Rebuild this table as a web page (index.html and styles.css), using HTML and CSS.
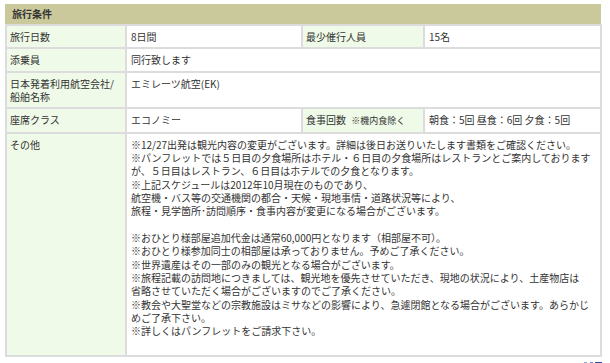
FILE: index.html
```html
<!DOCTYPE html>
<html lang="ja">
<head>
<meta charset="utf-8">
<title>旅行条件</title>
<link rel="stylesheet" href="styles.css">
</head>
<body>
<div class="box">
  <div class="ttl">旅行条件</div>
  <table class="cond">
    <colgroup>
      <col class="c1"><col class="c2"><col class="c3"><col class="c4">
    </colgroup>
    <tr>
      <th>旅行日数</th>
      <td>8日間</td>
      <th>最少催行人員</th>
      <td>15名</td>
    </tr>
    <tr>
      <th>添乗員</th>
      <td colspan="3">同行致します</td>
    </tr>
    <tr>
      <th>日本発着利用航空会社/<br>船舶名称</th>
      <td colspan="3">エミレーツ航空(EK)</td>
    </tr>
    <tr>
      <th>座席クラス</th>
      <td>エコノミー</td>
      <th>食事回数 <span class="note">※機内食除く</span></th>
      <td>朝食：5回 昼食：6回 夕食：5回</td>
    </tr>
    <tr>
      <th>その他</th>
      <td colspan="3" class="other">※12/27出発は観光内容の変更がございます。詳細は後日お送りいたします書類をご確認ください。<br>※パンフレットでは５日目の夕食場所はホテル・６日目の夕食場所はレストランとご案内しております<br>が、５日目はレストラン、６日目はホテルでの夕食となります。<br>※上記スケジュールは2012年10月現在のものであり、<br>航空機・バス等の交通機関の都合・天候・現地事情・道路状況等により、<br>旅程・見学箇所･訪問順序・食事内容が変更になる場合がございます。<br><br>※おひとり様部屋追加代金は通常60,000円となります（相部屋不可）。<br>※おひとり様参加同士の相部屋は承っておりません。予めご了承ください。<br>※世界遺産はその一部のみの観光となる場合がございます。<br>※旅程記載の訪問地につきましては、観光地を優先させていただき、現地の状況により、土産物店は<br>省略させていただく場合がございますのでご了承ください。<br>※教会や大聖堂などの宗教施設はミサなどの影響により、急遽閉館となる場合がございます。あらかじ<br>めご了承下さい。<br>※詳しくはパンフレットをご請求下さい。<br><br></td>
    </tr>
  </table>
  <div class="pagetop">
    <svg class="pt-icon" width="18" height="8" viewBox="0 0 18 8" aria-hidden="true">
      <rect x="0" y="5" width="3" height="3" fill="#8fa6d0"/>
      <rect x="6" y="5" width="3" height="3" fill="#6f8ccc"/>
      <rect x="11" y="5" width="7" height="3" fill="#2a4fa8"/>
    </svg>
  </div>
</div>
</body>
</html>
```

FILE: styles.css
```css
html, body {
  margin: 0;
  padding: 0;
  background: #ffffff;
}

body {
  font-family: "Noto Sans CJK JP", "Noto Sans", sans-serif;
  font-size: 10px;
  color: #333333;
}

.box {
  margin: 4px 0 0 5px;
  width: 597px;
}

.ttl {
  width: 589px;
  height: 20px;
  line-height: 20px;
  padding-left: 7px;
  background: #c9c99b;
  font-weight: bold;
  color: #333333;
}

.cond {
  width: 597px;
  table-layout: fixed;
  border-collapse: separate;
  border-spacing: 2px;
  background: #dcdcdc;
}

.c1 { width: 118px; }
.c2 { width: 174px; }
.c3 { width: 120px; }
.c4 { width: 175px; }

.cond th,
.cond td {
  padding: 4px 4px;
  line-height: 13.33px;
  vertical-align: top;
  text-align: left;
  font-weight: normal;
  white-space: nowrap;
  overflow: visible;
}

.cond th {
  background: #effae8;
  padding-left: 3px;
}

.cond td {
  background: #ffffff;
}

.other {
  padding-bottom: 6px;
}

.note {
  font-size: 9px;
  margin-left: 3px;
}

.pagetop {
  display: flex;
  justify-content: flex-end;
  padding: 0 0 0 0;
  margin-top: 0;
}

.pt-icon {
  display: block;
}
```
